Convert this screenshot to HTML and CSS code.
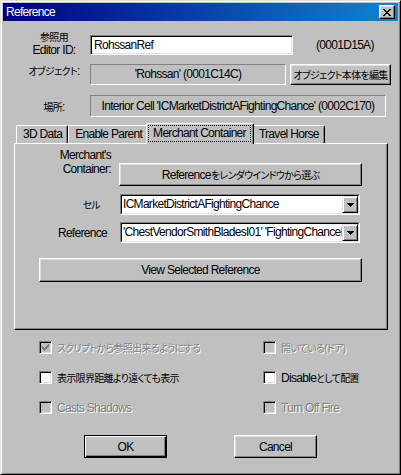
FILE: index.html
```html
<!DOCTYPE html>
<html lang="ja">
<head>
  <meta charset="UTF-8">
  <title>Reference</title>
  <link rel="stylesheet" href="styles.css">
</head>
<body>
  <div class="window">
    <div class="titlebar">
      <span class="title">Reference</span>
      <span class="close-btn">
        <svg width="8" height="7" viewBox="0 0 8 7" shape-rendering="crispEdges"><path d="M0 0h2v1H0zM6 0h2v1H6zM1 1h2v1H1zM5 1h2v1H5zM2 2h4v1H2zM3 3h2v1H3zM2 4h4v1H2zM1 5h2v1H1zM5 5h2v1H5zM0 6h2v1H0zM6 6h2v1H6z" fill="#000"/></svg>
      </span>
    </div>

    <div class="form-row row-id">
      <div class="form-label"><span class="ja">参照用</span><br>Editor ID:</div>
      <div class="edit">RohssanRef</div>
      <div class="form-id">(0001D15A)</div>
    </div>

    <div class="form-row row-object">
      <div class="form-label"><span class="ja">オブジェクト</span>:</div>
      <div class="static static-object">'Rohssan' (0001C14C)</div>
      <button class="btn btn-edit"><span class="ja">オブジェクト本体を編集</span></button>
    </div>

    <div class="form-row row-cell">
      <div class="form-label"><span class="ja">場所</span>:</div>
      <div class="static static-cell">Interior Cell 'ICMarketDistrictAFightingChance' (0002C170)</div>
    </div>

    <div class="tabs">
      <div class="tab-strip">
        <div class="tab">3D Data</div>
        <div class="tab">Enable Parent</div>
        <div class="tab active"><span class="focus">Merchant Container</span></div>
        <div class="tab">Travel Horse</div>
      </div>
      <div class="tab-panel">
        <div class="panel-row row-merchant">
          <div class="panel-label">Merchant's<br>Container:</div>
          <button class="btn btn-pick">Reference<span class="ja">をレンダウインドウから選ぶ</span></button>
        </div>
        <div class="panel-row row-combo">
          <div class="panel-label label-cell"><span class="ja">セル</span></div>
          <div class="combo">
            <div class="combo-inner">
              <div class="combo-text">ICMarketDistrictAFightingChance</div>
              <div class="combo-btn">
                <svg width="7" height="4" viewBox="0 0 7 4" shape-rendering="crispEdges"><path d="M0 0h7v1H0zM1 1h5v1H1zM2 2h3v1H2zM3 3h1v1H3z" fill="#000"/></svg>
              </div>
            </div>
          </div>
        </div>
        <div class="panel-row row-combo row-ref">
          <div class="panel-label label-ref">Reference</div>
          <div class="combo">
            <div class="combo-inner">
              <div class="combo-text">'ChestVendorSmithBladesI01' 'FightingChanceInterior'</div>
              <div class="combo-btn">
                <svg width="7" height="4" viewBox="0 0 7 4" shape-rendering="crispEdges"><path d="M0 0h7v1H0zM1 1h5v1H1zM2 2h3v1H2zM3 3h1v1H3z" fill="#000"/></svg>
              </div>
            </div>
          </div>
        </div>
        <button class="btn btn-view">View Selected Reference</button>
      </div>
    </div>

    <div class="options">
      <div class="check disabled">
        <span class="check-box">
          <svg width="7" height="7" viewBox="0 0 7 7" shape-rendering="crispEdges"><path d="M6 0h1v1H6zM5 1h2v1H5zM0 2h1v1H0zM4 2h3v1H4zM0 3h2v1H0zM3 3h3v1H3zM0 4h5v1H0zM1 5h3v1H1zM2 6h1v1H2z" fill="#808080"/></svg>
        </span>
        <span class="check-label ja">スクリプトから参照出来るようにする</span>
      </div>
      <div class="check disabled">
        <span class="check-box"></span>
        <span class="check-label ja">開いている(ドア)</span>
      </div>
      <div class="check">
        <span class="check-box"></span>
        <span class="check-label ja">表示限界距離より遠くても表示</span>
      </div>
      <div class="check">
        <span class="check-box"></span>
        <span class="check-label">Disable<span class="ja">として配置</span></span>
      </div>
      <div class="check disabled">
        <span class="check-box"></span>
        <span class="check-label">Casts Shadows</span>
      </div>
      <div class="check disabled">
        <span class="check-box"></span>
        <span class="check-label">Turn Off Fire</span>
      </div>
    </div>

    <div class="actions">
      <button class="btn btn-action default">OK</button>
      <button class="btn btn-action">Cancel</button>
    </div>
  </div>
</body>
</html>
```

FILE: styles.css
```css
* {
  box-sizing: border-box;
}
body {
  margin: 0;
  background-color: #c0c0c0;
  font-family: "Liberation Sans", "Noto Sans CJK JP", sans-serif;
  font-size: 12px;
  letter-spacing: -0.7px;
  color: #000;
}
.ja {
  font-size: 10px;
  font-feature-settings: "palt";
}
.window {
  width: 401px;
  height: 475px;
  padding: 2px;
  background-color: #c0c0c0;
  border: 1px solid;
  border-color: #dfdfdf #000 #000 #dfdfdf;
  box-shadow: inset 1px 1px #fff, inset -1px -1px #808080;
}
.titlebar {
  height: 18px;
  display: flex;
  align-items: center;
  justify-content: space-between;
  padding: 0 3px 0 3px;
  background: linear-gradient(90deg, #000080, #1084d0);
  color: #fff;
}
.title {
  line-height: 18px;
}
.close-btn {
  width: 16px;
  height: 14px;
  display: flex;
  align-items: center;
  justify-content: center;
  background-color: #c0c0c0;
  border: 1px solid;
  border-color: #fff #000 #000 #fff;
  box-shadow: inset -1px -1px #808080, inset 1px 1px #dfdfdf;
}

/* top form */
.form-row {
  display: flex;
  padding-left: 15px;
}
.form-label {
  width: 72px;
  text-align: center;
}
.row-id {
  margin-top: 10px;
  align-items: flex-start;
}
.row-id .form-label {
  line-height: 13px;
}
.edit {
  width: 203px;
  height: 20px;
  margin-top: 4px;
  padding-left: 3px;
  line-height: 18px;
  background-color: #fff;
  border: 1px solid;
  border-color: #808080 #fff #fff #808080;
  box-shadow: inset 1px 1px #000, inset -1px -1px #dfdfdf;
}
.form-id {
  margin: 4px 0 0 23px;
  line-height: 20px;
}
.row-object {
  margin-top: 7px;
}
.row-object .form-label {
  padding-top: 1px;
  line-height: 13px;
}
.static {
  border: 1px solid;
  border-color: #808080 #fff #fff #808080;
  text-align: center;
  white-space: nowrap;
  overflow: hidden;
}
.static-object {
  width: 196px;
  height: 21px;
  line-height: 19px;
}
.row-cell {
  margin-top: 10px;
  align-items: center;
}
.static-cell {
  width: 296px;
  height: 22px;
  line-height: 20px;
}

/* buttons */
.btn {
  font: inherit;
  letter-spacing: inherit;
  color: #000;
  background-color: #c0c0c0;
  padding: 0;
  border: 1px solid;
  border-color: #fff #000 #000 #fff;
  box-shadow: inset -1px -1px #808080, inset 1px 1px #dfdfdf;
  white-space: nowrap;
}
.btn-edit {
  width: 101px;
  height: 21px;
  margin-left: 4px;
}
.btn-pick {
  width: 243px;
  height: 23px;
  margin: 15px 0 0 8px;
}
.btn-view {
  display: block;
  width: 323px;
  height: 24px;
  margin: 15px 0 0 24px;
}
.btn-action {
  width: 83px;
  height: 23px;
}
.btn.default {
  border-color: #000;
  box-shadow: inset 1px 1px #fff, inset -1px -1px #000, inset -2px -2px #808080;
}

/* tabs */
.tabs {
  width: 374px;
  margin: 6px 0 0 11px;
}
.tab-strip {
  display: flex;
  align-items: flex-end;
  height: 20px;
  padding-left: 2px;
}
.tab {
  height: 18px;
  padding: 0 5px 0 6px;
  line-height: 17px;
  border: 1px solid;
  border-bottom: 0;
  border-color: #fff #000 transparent #fff;
  border-radius: 2px 2px 0 0;
  box-shadow: inset -1px 0 #808080;
  white-space: nowrap;
}
.tab.active {
  position: relative;
  z-index: 1;
  height: 21px;
  margin: 0 -2px -1px;
  padding: 1px 2px 0 1px;
  background-color: #c0c0c0;
}
.tab.active .focus {
  display: block;
  height: 17px;
  padding: 0 4px;
  line-height: 14px;
  border: 1px dotted #000;
}
.tab-panel {
  height: 187px;
  padding-top: 4px;
  border: 1px solid;
  border-color: #fff #000 #000 #fff;
  box-shadow: inset -1px -1px #808080;
}
.panel-row {
  display: flex;
  align-items: center;
}
.panel-label {
  width: 96px;
  text-align: right;
}
.row-merchant {
  align-items: flex-start;
}
.row-merchant .panel-label {
  line-height: 14px;
}
.row-combo {
  margin-top: 8px;
}
.row-ref {
  margin-top: 7px;
}
.label-cell {
  padding-right: 11px;
}
.label-ref {
  padding-right: 4px;
}
.combo {
  width: 240px;
  height: 21px;
  margin-left: 9px;
  border: 1px solid;
  border-color: #808080 #fff #fff #808080;
}
.combo-inner {
  display: flex;
  height: 100%;
  background-color: #fff;
  border: 1px solid;
  border-color: #000 #dfdfdf #dfdfdf #000;
}
.combo-text {
  flex: 1;
  padding-left: 1px;
  line-height: 17px;
  white-space: nowrap;
  overflow: hidden;
}
.combo-btn {
  width: 16px;
  height: 17px;
  display: flex;
  align-items: center;
  justify-content: center;
  background-color: #c0c0c0;
  border: 1px solid;
  border-color: #dfdfdf #000 #000 #dfdfdf;
  box-shadow: inset 1px 1px #fff, inset -1px -1px #808080;
}

/* options */
.options {
  display: grid;
  grid-template-columns: 224px 1fr;
  row-gap: 17px;
  margin: 11px 0 0 36px;
}
.check {
  display: flex;
  align-items: center;
  height: 13px;
  white-space: nowrap;
}
.check-box {
  width: 13px;
  height: 13px;
  margin-right: 5px;
  display: flex;
  align-items: center;
  justify-content: center;
  background-color: #fff;
  border: 1px solid;
  border-color: #808080 #fff #fff #808080;
  box-shadow: inset 1px 1px #000, inset -1px -1px #dfdfdf;
}
.check.disabled .check-box {
  background-color: #c0c0c0;
}
.check.disabled .check-label {
  color: #808080;
  text-shadow: 1px 1px #fff;
}
.actions {
  display: flex;
  justify-content: center;
  gap: 67px;
  margin-top: 21px;
}
```
